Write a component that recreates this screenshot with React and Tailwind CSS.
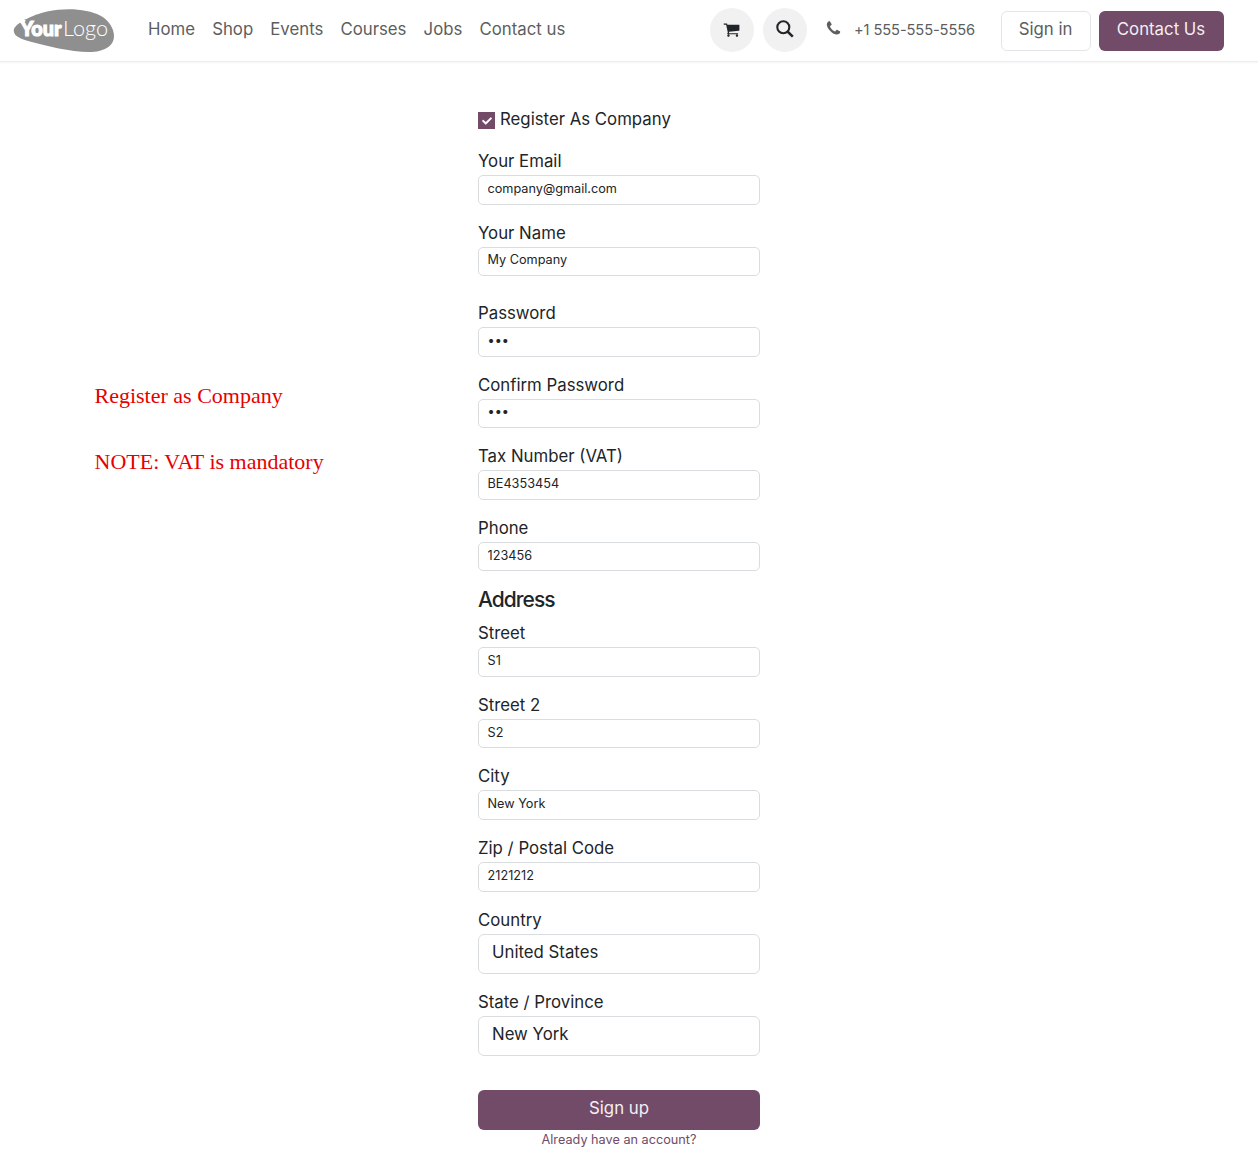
import { FaCheck } from "react-icons/fa";

const NAV_LINKS = [
  { id: "home", label: "Home" },
  { id: "shop", label: "Shop" },
  { id: "events", label: "Events" },
  { id: "courses", label: "Courses" },
  { id: "jobs", label: "Jobs" },
  { id: "contact", label: "Contact us" },
];

const ACCOUNT_FIELDS = [
  { id: "email", label: "Your Email", value: "company@gmail.com" },
  { id: "name", label: "Your Name", value: "My Company" },
];

const COMPANY_FIELDS = [
  { id: "password", label: "Password", value: "123", type: "password" },
  { id: "confirm", label: "Confirm Password", value: "123", type: "password" },
  { id: "vat", label: "Tax Number (VAT)", value: "BE4353454" },
  { id: "phone", label: "Phone", value: "123456" },
];

const ADDRESS_FIELDS = [
  { id: "street", label: "Street", value: "S1" },
  { id: "street2", label: "Street 2", value: "S2" },
  { id: "city", label: "City", value: "New York" },
  { id: "zip", label: "Zip / Postal Code", value: "2121212" },
];

function Logo() {
  return (
    <svg width="102" height="46" viewBox="0 0 102 46" className="block">
      <path
        d="M1 21C3 15 19 7 34 3.500C54 -.3 74 .8 88 8C96 12.500 101 21 101 28C101 38 91 44 76 44C57 44 34 38 17 33.500C6 30.500-.5 27 1 21Z"
        fill="#8f8f8f"
      />
      <path d="M4 12.500L8 10.500L13 12.500L9 16Z" fill="#fff" />
      <text
        x="7.500"
        y="28"
        textLength="41"
        lengthAdjust="spacingAndGlyphs"
        fill="#fff"
        stroke="#fff"
        strokeWidth="1.1"
        className="font-['Lato'] text-[21px] font-black"
      >
        Your
      </text>
      <text
        x="50"
        y="28"
        textLength="45"
        lengthAdjust="spacingAndGlyphs"
        fill="#fff"
        className="font-['Lato'] text-[21px] font-light"
      >
        Logo
      </text>
    </svg>
  );
}

function CartIcon() {
  return (
    <svg width="17" height="17" viewBox="0 0 1792 1792" fill="currentColor">
      <path d="M704 1536q0 52-38 90t-90 38-90-38-38-90 38-90 90-38 90 38 38 90zm896 0q0 52-38 90t-90 38-90-38-38-90 38-90 90-38 90 38 38 90zm128-1088v512q0 24-16.5 42.5t-40.5 21.5l-1044 122q13 60 13 70 0 16-24 64h920q26 0 45 19t19 45-19 45-45 19h-1024q-26 0-45-19t-19-45q0-11 8-31.5t16-36 21.5-40 15.5-29.5l-177-823h-204q-26 0-45-19t-19-45 19-45 45-19h256q16 0 28.5 6.5t19.5 15.5 13 24.5 8 26 5.5 29.5 4.5 26h1201q26 0 45 19t19 45z" />
    </svg>
  );
}

function PhoneIcon() {
  return (
    <svg width="17" height="17" viewBox="0 0 1792 1792" fill="currentColor">
      <path d="M1600 1240q0 27-10 70.5t-21 68.5q-21 50-122 106-94 51-186 51-27 0-53-3.5t-57.5-12.5-47-14.5-55.5-20.5-49-18q-98-35-175-83-127-79-264-216t-216-264q-48-77-83-175-3-9-18-49t-20.5-55.5-14.5-47-12.5-57.5-3.5-53q0-92 51-186 56-101 106-122 25-11 68.5-21t70.5-10q14 0 21 3 18 6 53 76 11 19 30 54t35 63.5 31 53.5q3 4 17.5 25t21.5 35.5 7 28.5q0 20-28.5 50t-62 55-62 53-28.5 46q0 9 5 22.5t8.5 20.5 14 24 11.5 19q76 137 174 235t235 174q2 1 19 11.5t24 14 20.5 8.5 22.5 5q18 0 46-28.5t53-62 55-62 50-28.5q14 0 28.5 7t35.5 21.5 25 17.5q25 15 53.5 31t63.5 35 54 30q70 35 76 53 3 7 3 21z" />
    </svg>
  );
}

function SearchIcon() {
  return (
    <svg
      width="18"
      height="18"
      viewBox="0 0 18 18"
      fill="none"
      stroke="#212529"
      strokeWidth="2.1"
    >
      <circle cx="7.300" cy="7.300" r="6" />
      <path d="M11.500 11.500L16.800 16.600" strokeWidth="2.500" />
    </svg>
  );
}

function Header() {
  return (
    <header className="flex h-[62px] items-start border-b border-[#ececee] pl-[13px] pr-[34px] text-[16.8px] text-[#5c5e60] shadow-[0_1px_2px_rgba(0,0,0,0.04)]">
      <a href="#" className="mt-[8px]">
        <Logo />
      </a>
      <nav className="ml-[33px] mt-[17px] flex gap-[17.1px] leading-[25px]">
        {NAV_LINKS.map((link) => (
          <a key={link.id} href="#" className="whitespace-nowrap">
            {link.label}
          </a>
        ))}
      </nav>
      <div className="ml-auto flex items-center pt-[8px]">
        <button className="flex size-[44px] items-center justify-center rounded-full bg-[#f1f1f2] text-[#212529]">
          <span className="mb-[2px] mr-[1px]">
            <CartIcon />
          </span>
        </button>
        <button className="ml-[9px] flex size-[44px] items-center justify-center rounded-full bg-[#f1f1f2]">
          <span className="mb-[2px] mr-[1px]">
            <SearchIcon />
          </span>
        </button>
        <div className="ml-[18px] flex items-center text-[14.7px]">
          <span className="mb-[2px]">
            <PhoneIcon />
          </span>
          <span className="ml-[12px] tracking-[-0.12px]">+1 555-555-5556</span>
        </div>
        <button className="ml-[26px] mt-[2px] h-[40px] w-[90px] rounded-[6px] border border-[#e3e5e8] pb-[3px] pr-px">
          Sign in
        </button>
        <button className="ml-[8px] mt-[2px] h-[40px] w-[125px] rounded-[6px] bg-[#714b67] pb-[3px] pr-px text-[#f4eef2]">
          Contact Us
        </button>
      </div>
    </header>
  );
}

function Field({ label, value, type = "text" }) {
  return (
    <div className="mb-[15px]">
      <label className="block h-[27px] leading-[26px]">{label}</label>
      <input
        type={type}
        defaultValue={value}
        className="block h-[29.6px] w-full rounded-[5px] border border-[#dadde0] px-[8.5px] pb-[3px] text-[12.7px]"
      />
    </div>
  );
}

function SelectField({ label, value }) {
  return (
    <div className="mb-[15px]">
      <label className="block h-[27px] leading-[26px]">{label}</label>
      <div className="h-[40px] rounded-[6px] border border-[#dadde0] px-[13px] leading-[35px]">
        {value}
      </div>
    </div>
  );
}

export default function App() {
  return (
    <div className="h-[1162px] overflow-hidden bg-white font-['Inter',sans-serif]">
      <Header />
      <main className="flex text-[16.8px] text-[#212529]">
        {/* Notes */}
        <aside className="w-[478px] pl-[94.5px] pt-[321px] font-['Liberation_Serif',serif] text-[22px] leading-[26px] text-[#e60000]">
          <p>Register as Company</p>
          <p className="mt-[40px]">NOTE: VAT is mandatory</p>
        </aside>

        {/* Signup form */}
        <form className="w-[282px] pt-[45px]">
          <div className="mb-[16px] flex h-[25px] items-center">
            <span className="mt-[2px] flex size-[17px] items-center justify-center bg-[#714b67] text-white">
              <FaCheck className="size-[10px]" />
            </span>
            <span className="ml-[5px]">Register As Company</span>
          </div>

          {ACCOUNT_FIELDS.map((field) => (
            <Field key={field.id} {...field} />
          ))}

          <div className="pt-[8.8px]">
            {COMPANY_FIELDS.map((field) => (
              <Field key={field.id} {...field} />
            ))}
          </div>

          <h3 className="mb-[5.8px] h-[28px] text-[21px] font-medium leading-[28px] tracking-[-0.95px]">
            Address
          </h3>
          {ADDRESS_FIELDS.map((field) => (
            <Field key={field.id} {...field} />
          ))}
          <SelectField label="Country" value="United States" />
          <SelectField label="State / Province" value="New York" />

          <button
            type="button"
            className="mt-[34px] block h-[40px] w-full rounded-[6px] bg-[#714b67] pb-[2px] text-[#f4eef2]"
          >
            Sign up
          </button>
          <a
            href="#"
            className="block text-center text-[12.7px] leading-[19px] text-[#714b67]"
          >
            Already have an account?
          </a>
        </form>
      </main>
    </div>
  );
}
